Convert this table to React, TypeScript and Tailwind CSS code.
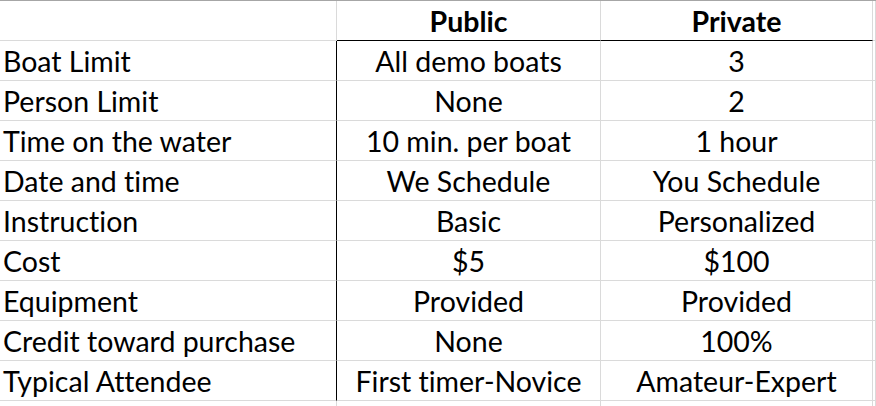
const rows: [string, string, string][] = [
  ["Boat Limit", "All demo boats", "3"],
  ["Person Limit", "None", "2"],
  ["Time on the water", "10 min. per boat", "1 hour"],
  ["Date and time", "We Schedule", "You Schedule"],
  ["Instruction", "Basic", "Personalized"],
  ["Cost", "$5", "$100"],
  ["Equipment", "Provided", "Provided"],
  ["Credit toward purchase", "None", "100%"],
  ["Typical Attendee", "First timer-Novice", "Amateur-Expert"],
];

const cell = "h-[40px] border-b border-r border-[#dadada] leading-[40px] whitespace-nowrap overflow-hidden";

export default function App() {
  return (
    <div
      className="h-[406px] w-[876px] overflow-hidden bg-white text-[28.5px] text-black [font-variant-ligatures:none]"
      style={{ fontFamily: "Lato, 'Open Sans', sans-serif" }}
    >
      <div className="h-px w-full bg-[#a6a6a6]" />
      <div className="grid grid-cols-[337px_264px_272px_1fr]">
        {/* header */}
        <div className={cell} />
        <div className={`${cell} border-b-black text-center font-bold`}>Public</div>
        <div className={`${cell} border-b-black text-center font-bold`}>Private</div>
        <div className={cell} />

        {rows.map(([label, pub, priv]) => (
          <div key={label} className="contents">
            <div className={`${cell} border-r-black pl-[3px]`}>{label}</div>
            <div className={`${cell} text-center`}>{pub}</div>
            <div className={`${cell} text-center`}>{priv}</div>
            <div className={cell} />
          </div>
        ))}

        {/* partial row below */}
        <div className={cell} />
        <div className={cell} />
        <div className={cell} />
        <div className={cell} />
      </div>
    </div>
  );
}
